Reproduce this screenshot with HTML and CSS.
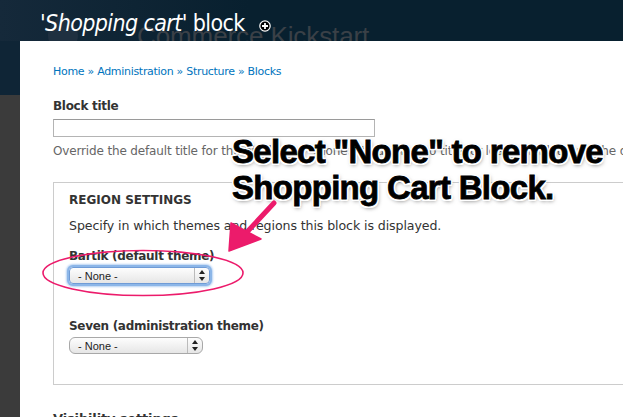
FILE: index.html
```html
<!DOCTYPE html>
<html>
<head>
<meta charset="utf-8">
<link rel="stylesheet" href="styles.css">
</head>
<body>
<header class="header">
  <div class="logo">
    <svg class="drop" width="38" height="40" viewBox="0 0 38 40"><path d="M19 2 C23 11 34 16 34 28 C34 36 27 42 19 42 C11 42 4 36 4 28 C4 16 15 11 19 2 Z" fill="#1f3040"/></svg>
    <span class="logo-text">Commerce Kickstart</span>
  </div>
  <h1 class="title">'<em>Shopping cart</em>' block</h1>
  <svg class="plus" width="12" height="12" viewBox="0 0 12 12"><circle cx="6" cy="6" r="5.2" fill="#000" stroke="#fff" stroke-width="1.2"/><path d="M6 3v6M3 6h6" stroke="#fff" stroke-width="1.8"/></svg>
</header>
<main class="page">
  <nav class="breadcrumb"><a>Home</a> » <a>Administration</a> » <a>Structure</a> » <a>Blocks</a></nav>
  <div class="field">
    <label class="label">Block title</label>
    <div class="textinput"></div>
    <div class="desc">Override the default title for the block. Use &lt;none&gt; to display no title, or leave blank to use the default block title.</div>
  </div>
  <fieldset class="fieldset">
    <div class="legend">REGION SETTINGS</div>
    <div class="fs-desc">Specify in which themes and regions this block is displayed.</div>
    <div class="sel-field">
      <label class="label">Bartik (default theme)</label>
      <div class="select focus"><span>- None -</span><span class="arrows"></span></div>
    </div>
    <div class="sel-field">
      <label class="label">Seven (administration theme)</label>
      <div class="select narrow"><span>- None -</span><span class="arrows"></span></div>
    </div>
  </fieldset>
  <div class="vis">Visibility settings</div>
</main>
<div class="note">Select "None" to remove<br>Shopping Cart Block.</div>
<svg class="annot" width="623" height="417" viewBox="0 0 623 417">
  <ellipse cx="143" cy="273" rx="100" ry="22.5" fill="none" stroke="#ec1b6b" stroke-width="1.6"/>
  <path d="M274 203 L247 232" stroke="#ec1b6b" stroke-width="5" stroke-linecap="round"/>
  <path d="M229 251 L231 223 L261 239 Z" fill="#ec1b6b" stroke="#ec1b6b" stroke-width="1.5" stroke-linejoin="round"/>
</svg>
</body>
</html>
```
FILE: styles.css
```css
html, body { margin: 0; padding: 0; }
body {
  width: 623px;
  height: 417px;
  overflow: hidden;
  position: relative;
  background: linear-gradient(to bottom, #0f2536 0, #0f2536 95px, #3b3b3b 95px);
  font-family: "DejaVu Sans", Verdana, sans-serif;
}
.header {
  height: 41px;
  position: relative;
  overflow: hidden;
  background: linear-gradient(to right, #15293a, #08202f 40%, #08202f);
  display: flex;
  align-items: flex-start;
  padding-left: 40px;
}
.logo {
  position: absolute;
  left: 44px;
  top: 8px;
  display: flex;
  align-items: flex-start;
}
.logo-text {
  font-family: "Liberation Sans", Arial, sans-serif;
  font-size: 26px;
  line-height: 30px;
  color: #3a4047;
  margin-left: 55px;
  margin-top: 13px;
  letter-spacing: -0.1px;
}
.title {
  position: relative;
  margin: 10px 0 0 0;
  font-family: "DejaVu Sans Condensed", "DejaVu Sans", sans-serif;
  font-size: 23px;
  font-weight: normal;
  color: #fff;
  line-height: 26px;
  letter-spacing: -0.6px;
}
.title em { font-style: italic; }
.plus { position: relative; margin: 20px 0 0 14px; }
.page {
  margin-left: 20px;
  background: #fff;
  height: 376px;
  padding: 23px 0 0 33px;
  box-sizing: border-box;
  color: #333;
  font-size: 12px;
  letter-spacing: -0.15px;
}
.breadcrumb { color: #0074bd; font-size: 11px; line-height: 16px; letter-spacing: -0.3px; }
.breadcrumb a { color: #0074bd; }
.field { margin-top: 18px; }
.label { display: block; font-weight: bold; font-size: 12px; line-height: 16px; color: #333; letter-spacing: -0.3px; }
.textinput {
  margin-top: 5px;
  width: 320px;
  height: 16px;
  border: 1px solid #b4b4b4;
  border-top-color: #9a9a9a;
}
.desc {
  margin-top: 6px;
  color: #666;
  font-size: 12px;
  white-space: nowrap;
  line-height: 16px;
}
.fieldset {
  margin: 23px 0 0 0;
  border: 1px solid #ccc;
  border-right: none;
  padding: 8px 0 30px 15px;
  height: 203px;
  box-sizing: border-box;
  min-width: 0;
}
.legend { font-size: 12px; font-weight: bold; letter-spacing: 0; color: #333; line-height: 16px; margin-top: 1px; }
.fs-desc { margin-top: 10px; line-height: 16px; font-size: 12.6px; letter-spacing: -0.1px; }
.sel-field { margin-top: 14px; }
.sel-field + .sel-field { margin-top: 34px; }
.select {
  margin-top: 3px;
  width: 141px;
  height: 17px;
  box-sizing: border-box;
  border: 1px solid #a8a8a8;
  border-radius: 4px;
  background: linear-gradient(#fdfdfd, #e6e6e6);
  display: flex;
  justify-content: space-between;
  align-items: center;
  font-family: "Liberation Sans", Arial, sans-serif;
  font-size: 11px;
  letter-spacing: 0;
  color: #222;
  padding-left: 8px;
  position: relative;
}
.select.narrow { width: 134px; margin-top: 3px; border-radius: 6px; }
.select.focus {
  box-shadow: 0 0 0 2px #8cb6e8, 0 0 2px 3px #b7d2f3;
  border-color: #6f9bd6;
}
.arrows {
  width: 14px;
  height: 100%;
  border-left: 1px solid #bbb;
  position: relative;
}
.arrows::before, .arrows::after {
  content: "";
  position: absolute;
  left: 4px;
  border-left: 3px solid transparent;
  border-right: 3px solid transparent;
}
.arrows::before { top: 2px; border-bottom: 4px solid #222; }
.arrows::after { bottom: 2px; border-top: 4px solid #222; }
.vis { margin-top: 26px; font-size: 13px; font-weight: bold; color: #333; }
.note {
  position: absolute;
  left: 232px;
  top: 134px;
  white-space: nowrap;
  font-family: "Liberation Sans", Arial, sans-serif;
  font-weight: bold;
  font-size: 33px;
  line-height: 36px;
  color: #000;
  letter-spacing: -0.7px;
  -webkit-text-stroke: 0.8px #000;
  text-shadow:
    2px 0 0 #fff, -2px 0 0 #fff, 0 2px 0 #fff, 0 -2px 0 #fff,
    1.5px 1.5px 0 #fff, -1.5px 1.5px 0 #fff, 1.5px -1.5px 0 #fff, -1.5px -1.5px 0 #fff,
    1px 2px 4px rgba(0,0,0,0.55);
}
.annot { position: absolute; left: 0; top: 0; pointer-events: none; }
```
